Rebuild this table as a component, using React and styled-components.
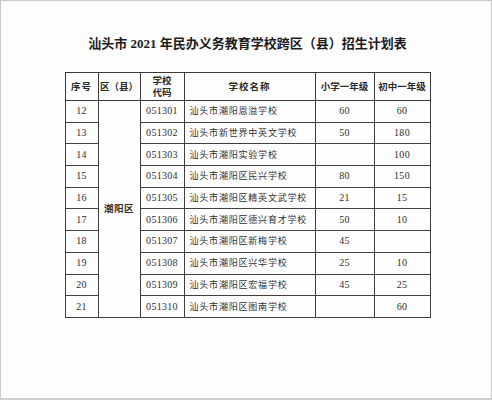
import React from "react"
import styled, { createGlobalStyle } from "styled-components"

const GlobalStyle = createGlobalStyle`
	html, body {
		margin: 0;
		padding: 0;
		background: #fff;
	}
`

const Page = styled.div`
	box-sizing: border-box;
	width: 492px;
	height: 400px;
	border: 1px solid #c9c9c9;
	border-bottom: 2px solid #cfcfcf;
	background: #fdfdfd;
	display: flex;
	flex-direction: column;
	align-items: center;
	padding: 34px 0 0 3px;
	font-family: "Liberation Serif", "Noto Sans CJK SC", serif;
	color: #262626;
`

const Title = styled.h1`
	margin: 0 0 19px;
	font-size: 13px;
	line-height: 18px;
	font-weight: 700;
	color: #1c1c1c;
	white-space: nowrap;
`

const Table = styled.table`
	width: 365px;
	table-layout: fixed;
	border-collapse: collapse;
	border: 1.5px solid #2b2b2b;
`

const Th = styled.th`
	height: 27px;
	padding: 0;
	border: 1px solid #3a3a3a;
	border-bottom-width: 1.5px;
	font-size: 9.5px;
	line-height: 12px;
	font-weight: 700;
	color: #2a2a2a;
	text-align: center;
	letter-spacing: ${props => props.$spaced ? "1px" : "0"};
`

const Td = styled.td`
	height: 20.7px;
	padding: 0 0 0 ${props => props.$left ? "5px" : "0"};
	border: 1px solid #3f3f3f;
	font-size: ${props => props.$name ? "9px" : "10px"};
	line-height: 12px;
	color: #303030;
	text-align: ${props => props.$left ? "left" : "center"};
	letter-spacing: ${props => props.$name ? "0.8px" : "0.3px"};
	white-space: nowrap;
`

const District = styled(Td)`
	font-weight: 700;
	font-size: 9.5px;
	letter-spacing: 0.5px;
`

const Col = styled.col`
	width: ${props => props.$w}px;
`

const rows = [
	{ no: 12, code: "051301", name: "汕头市潮阳恩溢学校", primary: "60", middle: "60" },
	{ no: 13, code: "051302", name: "汕头市新世界中英文学校", primary: "50", middle: "180" },
	{ no: 14, code: "051303", name: "汕头市潮阳实验学校", primary: "", middle: "100" },
	{ no: 15, code: "051304", name: "汕头市潮阳区民兴学校", primary: "80", middle: "150" },
	{ no: 16, code: "051305", name: "汕头市潮阳区精英文武学校", primary: "21", middle: "15" },
	{ no: 17, code: "051306", name: "汕头市潮阳区德兴育才学校", primary: "50", middle: "10" },
	{ no: 18, code: "051307", name: "汕头市潮阳区新梅学校", primary: "45", middle: "" },
	{ no: 19, code: "051308", name: "汕头市潮阳区兴华学校", primary: "25", middle: "10" },
	{ no: 20, code: "051309", name: "汕头市潮阳区宏福学校", primary: "45", middle: "25" },
	{ no: 21, code: "051310", name: "汕头市潮阳区图南学校", primary: "", middle: "60" },
]

const App = () => (
	<Page>
		<GlobalStyle />
		<Title>汕头市 2021 年民办义务教育学校跨区（县）招生计划表</Title>
		<Table>
			<colgroup>
				<Col $w={33} />
				<Col $w={42} />
				<Col $w={44} />
				<Col $w={131} />
				<Col $w={59} />
				<Col $w={56} />
			</colgroup>
			<thead>
				<tr>
					<Th $spaced>序号</Th>
					<Th>区（县）</Th>
					<Th>学校<br />代码</Th>
					<Th $spaced>学校名称</Th>
					<Th>小学一年级</Th>
					<Th>初中一年级</Th>
				</tr>
			</thead>
			<tbody>
				{rows.map((row, i) => (
					<tr key={row.no}>
						<Td>{row.no}</Td>
						{i === 0 && <District rowSpan={rows.length}>潮阳区</District>}
						<Td>{row.code}</Td>
						<Td $left $name>{row.name}</Td>
						<Td>{row.primary}</Td>
						<Td>{row.middle}</Td>
					</tr>
				))}
			</tbody>
		</Table>
	</Page>
)

export default App
